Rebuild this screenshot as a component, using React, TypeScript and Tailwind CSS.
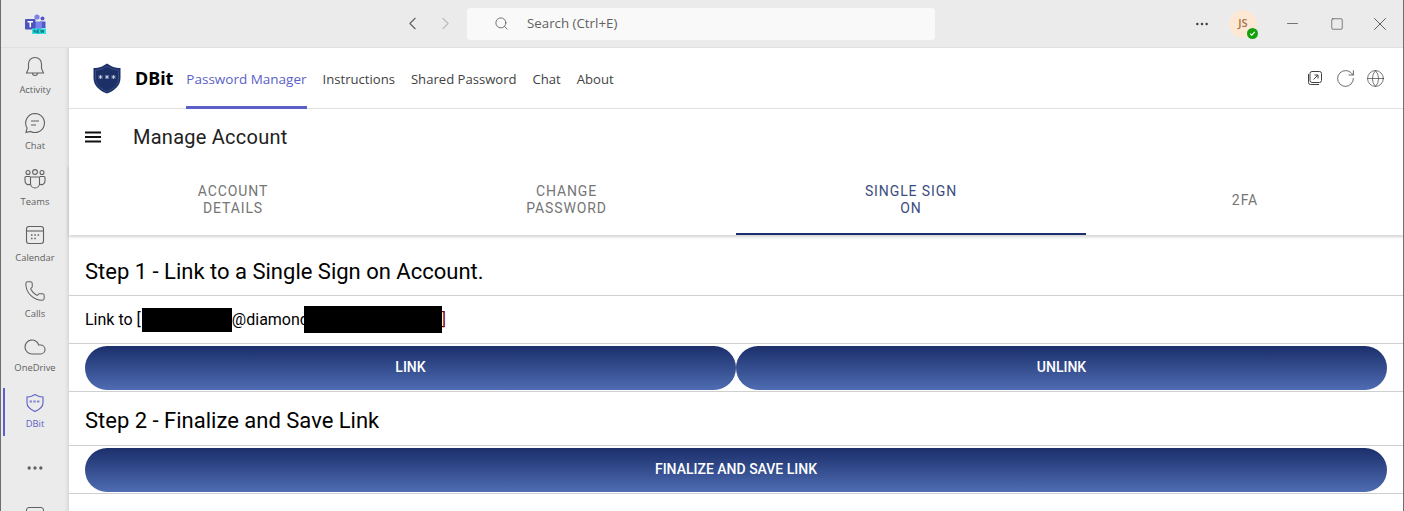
import React from "react";
import { ChevronLeft, ChevronRight, Search, Minus, Square, X, MoreHorizontal, Phone, Cloud, RotateCw, Globe } from "lucide-react";

const chrome = { fontFamily: '"Open Sans", "Noto Sans", sans-serif' };

function TeamsLogo() {
  return (
    <svg width="22" height="20" viewBox="0 0 22 20">
      <circle cx="12" cy="3" r="2.6" fill="#7b83eb" />
      <circle cx="17.500" cy="4.500" r="2" fill="#5059c9" />
      <path d="M15 7.500h5.500V14h-5.500z" fill="#5059c9" />
      <path d="M8 7.500h9V15H8z" fill="#7b83eb" />
      <rect x="0" y="5" width="10.500" height="10.500" rx="1" fill="#4b53bc" />
      <path d="M2.500 7.800h5.500M5.300 7.800v5.500" stroke="#fff" strokeWidth="1.500" />
      <rect x="7" y="14.500" width="14" height="5.500" fill="#2fe3e3" />
      <path d="M9 15.800v3M9 15.800l2 3v-3M12.500 15.800h2M12.500 15.800v3h2M12.500 17.300h1.500M15.500 15.800l.8 3 .9-3 .9 3 .8-3" stroke="#0b3f50" strokeWidth="0.6" fill="none" />
    </svg>
  );
}

function ShieldLogo() {
  return (
    <svg width="28" height="31" viewBox="0 0 28 31">
      <path d="M14 0.500 L19 3.500 C22 4.500 25 5 27.500 5 V15 C27.500 23 21 28 14 30.500 C7 28 0.500 23 0.500 15 V5 C3 5 6 4.500 9 3.500 Z" fill="#1c2f66" />
      <path d="M14 3 L18 5.500 C21 6.500 23.500 7 25.500 7 V15 C25.500 22 20 26 14 28.500 C8 26 2.500 22 2.500 15 V7 C4.500 7 7 6.500 10 5.500 Z" fill="none" stroke="#44598f" strokeWidth="0.7" />
      <path d="M5.500 14h4M7.500 12v4M6 12.500l3 3M9 12.500l-3 3M12 14h4M14 12v4M12.500 12.500l3 3M15.500 12.500l-3 3M18.500 14h4M20.500 12v4M19 12.500l3 3M22 12.500l-3 3" stroke="#ccd4e8" strokeWidth="0.8" />
    </svg>
  );
}

function BellIcon() {
  return (
    <svg width="24" height="24" viewBox="0 0 24 24" fill="none" stroke="#616161" strokeWidth="1.100">
      <path d="M12 2.500c-4 0-6.500 2.800-6.500 6.500v4.500L3.500 18h17l-2-4.500V9c0-3.700-2.500-6.500-6.500-6.500z" />
      <path d="M9.500 18a2.500 2.500 0 0 0 5 0" />
    </svg>
  );
}

function ChatIcon() {
  return (
    <svg width="24" height="24" viewBox="0 0 24 24" fill="none" stroke="#616161" strokeWidth="1.100">
      <path d="M12 2.500a9.500 9.500 0 1 1-4.500 17.900L3 21.500l1.100-4.500A9.500 9.500 0 0 1 12 2.500z" />
      <path d="M8 10h8M8 14h5" strokeWidth="1.200" />
    </svg>
  );
}

function TeamsIcon() {
  return (
    <svg width="22" height="20" viewBox="0 0 22 20" fill="none" stroke="#616161" strokeWidth="1.100">
      <circle cx="4" cy="3.500" r="2" />
      <circle cx="11" cy="3" r="2.400" />
      <circle cx="18" cy="3.500" r="2" />
      <path d="M6.500 8h9v6.500a4.500 4.500 0 0 1-9 0z" />
      <path d="M6 7.500H2a1 1 0 0 0-1 1V12a3.500 3.500 0 0 0 5.500 3M16 7.500h4a1 1 0 0 1 1 1V12a3.500 3.500 0 0 1-5.500 3" />
    </svg>
  );
}

function CalendarIcon() {
  return (
    <svg width="22" height="22" viewBox="0 0 22 22" fill="none" stroke="#616161" strokeWidth="1.100">
      <rect x="2.500" y="2.500" width="17" height="17" rx="2.500" />
      <path d="M2.500 7h17" />
      <path d="M7 11h1.500M10.300 11h1.500M13.600 11h1.500M7 14.500h1.500M10.300 14.500h1.500" strokeWidth="1.500" />
    </svg>
  );
}

function RailItem({ label, icon, active = false, tight = false }: { label: string; icon: React.ReactNode; active?: boolean; tight?: boolean }) {
  return (
    <div className="relative flex h-14 shrink-0 flex-col items-center pl-[1px] pt-[6px]">
      {active && <div className="absolute left-[3px] top-[4px] bottom-[4px] w-[2px] bg-[#5b5fc7]" />}
      <div className="flex h-[26px] items-center justify-center">{icon}</div>
      <span className={`text-[9.4px] leading-[14px] ${tight ? "mt-[1px]" : "mt-[3px]"} ${active ? "text-[#5b5fc7]" : "text-[#616161]"}`}>{label}</span>
    </div>
  );
}

function Rail() {
  return (
    <aside className="flex w-[69px] shrink-0 flex-col bg-[#ebebeb] shadow-[inset_-5px_0_4px_-4px_rgba(0,0,0,0.12)]" style={chrome}>
      <RailItem label="Activity" icon={<BellIcon />} />
      <RailItem label="Chat" icon={<ChatIcon />} />
      <RailItem label="Teams" icon={<TeamsIcon />} />
      <RailItem label="Calendar" icon={<CalendarIcon />} />
      <RailItem label="Calls" icon={<Phone size={22} strokeWidth={1.100} color="#616161" />} />
      <RailItem label="OneDrive" tight icon={<Cloud size={24} strokeWidth={1.100} color="#616161" />} />
      <RailItem
        label="DBit"
        active
        tight
        icon={
          <svg width="20" height="20" viewBox="0 0 20 20" fill="none" stroke="#5b5fc7" strokeWidth="1.100">
            <path d="M10 1.500l3 1.500c1.500.6 3 .9 5 1V10c0 4-3.500 6.500-8 8.500C5.500 16.500 2 14 2 10V4c2-.1 3.500-.4 5-1z" />
            <path d="M4.500 8.500h11" strokeDasharray="2.500 1.200" strokeWidth="2.200" strokeOpacity="0.7" />
          </svg>
        }
      />
      <div className="flex h-[54px] shrink-0 items-center justify-center pt-[1px]">
        <MoreHorizontal size={20} strokeWidth={2} color="#616161" />
      </div>
      <div className="mx-auto mt-[13px] h-6 w-[18px] shrink-0 rounded-[3px] border border-[#616161]" />
    </aside>
  );
}

function TitleBar() {
  return (
    <header className="flex h-12 shrink-0 items-center border-b border-[#e0e0e0] bg-[#ebebeb]" style={chrome}>
      <div className="ml-[25px]"><TeamsLogo /></div>
      <div className="ml-[355px] flex items-center gap-[12px]">
        <ChevronLeft size={21} strokeWidth={1.300} color="#616161" />
        <ChevronRight size={21} strokeWidth={1.300} color="#bdbdbd" />
      </div>
      <div className="ml-[11px] flex h-8 w-[468px] items-center rounded-[4px] bg-[#f9f9f9] pl-[27px]">
        <Search size={15} strokeWidth={1.400} color="#616161" />
        <span className="ml-[18px] pt-[1px] text-[13.300px] text-[#616161]">Search (Ctrl+E)</span>
      </div>
      <MoreHorizontal className="ml-[259px]" size={16} strokeWidth={1.800} color="#424242" />
      <div className="relative ml-[19px] flex h-7 w-7 items-center justify-center rounded-full bg-[#fde7d5] text-[11px] font-semibold text-[#a8703f]">
        JS
        <div className="absolute -bottom-[1px] -right-[1px] flex h-[11px] w-[11px] items-center justify-center rounded-full bg-[#13a10e]">
          <svg width="7" height="7" viewBox="0 0 7 7" fill="none" stroke="#fff" strokeWidth="1.200"><path d="M1.200 3.600l1.600 1.500 3-3.200" /></svg>
        </div>
      </div>
      <Minus className="ml-[27px]" size={17} strokeWidth={1} color="#424242" />
      <Square className="ml-[29px]" size={14} strokeWidth={1.100} color="#424242" />
      <X className="ml-[25px]" size={22} strokeWidth={0.900} color="#424242" />
    </header>
  );
}

function AppHeader() {
  const navItems = ["Instructions", "Shared Password", "Chat", "About"];
  return (
    <div className="flex h-[61px] shrink-0 items-center border-b border-[#e0e0e0] pl-[24px] pr-[14px] text-[13.100px]" style={chrome}>
      <ShieldLogo />
      <span className="ml-[14px] text-[18px] font-bold text-black" style={{ fontFamily: '"Noto Sans", sans-serif' }}>DBit</span>
      <nav className="ml-[13px] flex h-full items-center gap-[16px] text-[#424242]">
        <span className="-mb-[1px] flex h-full items-center border-b-[3px] border-[#5b5fc7] pt-[5px] text-[13.500px] font-medium text-[#5b5fc7]">Password Manager</span>
        {navItems.map((item) => (
          <span key={item} className="pt-[4px]">{item}</span>
        ))}
      </nav>
      <div className="ml-auto flex items-center text-[#424242]">
        <div className="flex w-[30px] justify-center">
          <svg width="16" height="16" viewBox="0 0 16 16" fill="none" stroke="#424242" strokeWidth="1">
            <rect x="3" y="1.500" width="11.500" height="11" rx="2" />
            <path d="M1.500 4v8.500a2 2 0 0 0 2 2H12M6.500 9.500l4.500-4.500M7.500 5H11v3.500" />
          </svg>
        </div>
        <div className="flex w-[30px] justify-center"><RotateCw size={21} strokeWidth={0.900} /></div>
        <div className="flex w-[30px] justify-center"><Globe size={19} strokeWidth={0.900} /></div>
      </div>
    </div>
  );
}

function Tabs() {
  return (
    <div className="flex h-[70px] shrink-0 text-[14px] leading-[17px] tracking-[0.900px] text-[#757575] shadow-[0_2px_3px_rgba(0,0,0,0.18)]">
      <div className="flex w-[328px] items-center justify-center border-b-2 border-transparent pt-[1px] text-center">ACCOUNT<br />DETAILS</div>
      <div className="flex w-[339px] items-center justify-center border-b-2 border-transparent pt-[1px] text-center">CHANGE<br />PASSWORD</div>
      <div className="flex w-[350px] items-center justify-center border-b-2 border-[#1c2f6e] pt-[1px] text-center text-[#3b4c80]">SINGLE SIGN<br />ON</div>
      <div className="flex flex-1 items-center justify-center text-center">2FA</div>
    </div>
  );
}

function ActionButton({ label, className = "" }: { label: string; className?: string }) {
  return (
    <button className={`h-11 rounded-full bg-gradient-to-b from-[#1c2f6b] to-[#4f6db3] text-[14px] font-medium text-white ${className}`}>
      {label}
    </button>
  );
}

function StepHeading({ children, className }: { children: React.ReactNode; className: string }) {
  return <h2 className={`flex items-end border-b border-[#cfcfcf] pl-[16px] text-[22px] text-black ${className}`}>{children}</h2>;
}

export default function App() {
  return (
    <div className="relative flex h-[511px] w-[1404px] flex-col overflow-hidden bg-white">
      <TitleBar />
      <div className="flex min-h-0 flex-1">
        <Rail />
        <main className="flex min-w-0 flex-1 flex-col bg-white" style={{ fontFamily: "Roboto, sans-serif" }}>
          <AppHeader />
          <div className="flex h-14 shrink-0 items-center pl-[16px]">
            <svg width="16" height="12" viewBox="0 0 16 12" fill="#111"><path d="M0 0.500h16v2H0zM0 5h16v2H0zM0 9.500h16v2H0z" /></svg>
            <span className="ml-[32px] text-[20px] tracking-[0.250px] text-[#212121]">Manage Account</span>
          </div>
          <Tabs />
          <section>
            <StepHeading className="h-[61px] pb-[7px]">Step 1 - Link to a Single Sign on Account.</StepHeading>
            <div className="flex h-[48px] items-center border-b border-[#cfcfcf] pl-[16px] text-[16px] text-black">
              Link to [
              <span className="ml-[1px] inline-block h-6 w-[90px] bg-black" />
              @diamond
              <span className="-ml-[5px] inline-block h-[27px] w-[138px] bg-black" />
              <span className="text-[#7a0000]">]</span>
            </div>
            <div className="flex h-[48px] items-center border-b border-[#cfcfcf] pl-[16px] pr-[17px]">
              <ActionButton label="LINK" className="flex-1" />
              <ActionButton label="UNLINK" className="flex-1" />
            </div>
            <StepHeading className="h-[54px] pb-[8px]">Step 2 - Finalize and Save Link</StepHeading>
            <div className="flex h-[48px] items-center border-b border-[#cfcfcf] pl-[16px] pr-[17px]">
              <ActionButton label="FINALIZE AND SAVE LINK" className="flex-1" />
            </div>
          </section>
        </main>
      </div>
      <div className="absolute inset-y-0 left-0 w-[1px] bg-[#6e6e6e]" />
      <div className="absolute inset-y-0 right-0 w-[1px] bg-[#6e6e6e]" />
    </div>
  );
}
